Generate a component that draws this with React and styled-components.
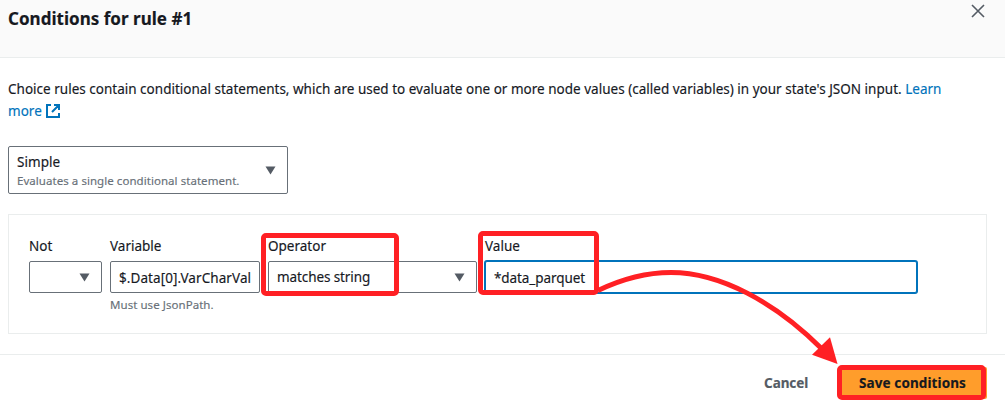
import React from "react";
import styled, { createGlobalStyle, css } from "styled-components";

const GlobalStyle = createGlobalStyle`
  * { box-sizing: border-box; }
  body {
    margin: 0;
    background: #fff;
    color: #16191f;
    font: 400 13.5px/22px "Noto Sans", "Open Sans", sans-serif;
    -webkit-text-stroke: 0.15px currentColor;
    overflow: hidden;
  }
`;

const Modal = styled.div`
  position: relative;
  width: 1005px;
  height: 406px;
  overflow: hidden;
`;

const Header = styled.header`
  display: flex;
  justify-content: space-between;
  align-items: flex-start;
  height: 58px;
  padding: 3px 19px 0 8px;
  background: #fafafa;
  border-bottom: 1px solid #eaeded;
`;

const Title = styled.h2`
  margin: 5px 0 0;
  font-size: 17px;
  line-height: 22px;
  font-weight: 700;
  letter-spacing: 0.02px;
  white-space: nowrap;
`;

const CloseButton = styled.button`
  display: flex;
  padding: 0;
  border: 0;
  background: none;
  color: #545b64;
`;

const Body = styled.main`
  padding: 20px 18px 20px 8px;
`;

const Description = styled.p`
  margin: 0 0 24px;
  white-space: nowrap;
  letter-spacing: 0.01px;
`;

const Link = styled.a`
  color: #0073bb;
`;

const ExternalIcon = styled.svg`
  margin-left: 4px;
  vertical-align: -2px;
`;

const control = css`
  display: flex;
  align-items: center;
  border: 1px solid #687078;
  border-radius: 2px;
  background: #fff;
  white-space: nowrap;
`;

const TypeSelect = styled.div`
  ${control}
  justify-content: space-between;
  width: 280px;
  height: 48px;
  padding: 0 11px 0 8px;
`;

const OptionText = styled.div`
  padding-top: 2px;
`;

const OptionLabel = styled.div`
  line-height: 20px;
  letter-spacing: 0.05px;
`;

const Hint = styled.div`
  color: #687078;
  font-size: 11.5px;
  line-height: 18px;
  letter-spacing: 0.05px;
  white-space: nowrap;
`;

const RuleCard = styled.section`
  display: flex;
  align-items: flex-start;
  gap: 8px;
  height: 120px;
  margin-top: 20px;
  padding: 20px;
  border: 1px solid #eaeded;
`;

const Field = styled.div`
  width: ${(p) => p.$width}px;
`;

const Label = styled.div`
  margin-bottom: 4px;
`;

const SelectBox = styled.div`
  ${control}
  justify-content: space-between;
  height: 32px;
  padding: 0 11px 0 8px;
  letter-spacing: -0.1px;
`;

const InputBox = styled.div`
  ${control}
  height: 32px;
  padding: 2px 0 0 8px;
  margin-bottom: 3px;
  letter-spacing: ${(p) => p.$spacing || "0"};
  ${(p) =>
    p.$focused &&
    css`
      border-color: #0073bb;
      box-shadow: 0 0 0 1px #0073bb;
    `}
`;

const Footer = styled.footer`
  display: flex;
  justify-content: flex-end;
  align-items: flex-start;
  gap: 10px;
  height: 52px;
  padding: 12px 18px 0 0;
  border-top: 1px solid #eaeded;
`;

const Button = styled.button`
  height: 32px;
  padding: 0 21px 0 20px;
  border: 0;
  border-radius: 2px;
  background: ${(p) => (p.$primary ? "#ff9d2b" : "transparent")};
  color: ${(p) => (p.$primary ? "#16191f" : "#545b64")};
  font: 700 13.5px/32px "Noto Sans", "Open Sans", sans-serif;
  letter-spacing: ${(p) => (p.$primary ? "0.1px" : "-0.1px")};
  white-space: nowrap;
`;

const Highlight = styled.div`
  position: absolute;
  left: ${(p) => p.$x}px;
  top: ${(p) => p.$y}px;
  width: ${(p) => p.$w}px;
  height: ${(p) => p.$h}px;
  border: 5px solid #ff2024;
  border-radius: 5px;
`;

const ArrowLayer = styled.svg`
  position: absolute;
  left: 0;
  top: 0;
  pointer-events: none;
`;

const Caret = () => (
  <svg width="11" height="9" viewBox="0 0 11 9">
    <path d="M0.5 0.5H10.5L5.5 8.5Z" fill="#545b64" />
  </svg>
);

export default function App() {
  return (
    <>
      <GlobalStyle />
      <Modal>
        <Header>
          <Title>Conditions for rule #1</Title>
          <CloseButton aria-label="Close">
            <svg width="16" height="16" viewBox="0 0 16 16" fill="none" stroke="currentColor" strokeWidth="1.6">
              <path d="M2 2L14 14M14 2L2 14" />
            </svg>
          </CloseButton>
        </Header>
        <Body>
          <Description>
            Choice rules contain conditional statements, which are used to evaluate one or more node values (called
            variables) in your state's JSON input. <Link>Learn</Link>
            <br />
            <Link>
              more
              <ExternalIcon width="14" height="14" viewBox="0 0 14 14" fill="none" stroke="#0073bb" strokeWidth="2">
                <path d="M5 1H1V13H13V9M8 1H13V6M13 1L6 8" />
              </ExternalIcon>
            </Link>
          </Description>
          <TypeSelect>
            <OptionText>
              <OptionLabel>Simple</OptionLabel>
              <Hint>Evaluates a single conditional statement.</Hint>
            </OptionText>
            <Caret />
          </TypeSelect>
          <RuleCard>
            <Field $width={73}>
              <Label>Not</Label>
              <SelectBox>
                <span />
                <Caret />
              </SelectBox>
            </Field>
            <Field $width={150}>
              <Label>Variable</Label>
              <InputBox $spacing="0.08px">$.Data[0].VarCharVal</InputBox>
              <Hint>Must use JsonPath.</Hint>
            </Field>
            <Field $width={209}>
              <Label>Operator</Label>
              <SelectBox>
                matches string
                <Caret />
              </SelectBox>
            </Field>
            <Field $width={432}>
              <Label>Value</Label>
              <InputBox $focused $spacing="-0.08px">*data_parquet</InputBox>
            </Field>
          </RuleCard>
        </Body>
        <Footer>
          <Button>Cancel</Button>
          <Button $primary>Save conditions</Button>
        </Footer>
        <Highlight $x={261} $y={233} $w={138} $h={63} />
        <Highlight $x={478} $y={231} $w={121} $h={64} />
        <Highlight $x={837} $y={365} $w={149} $h={35} />
        <ArrowLayer width="1005" height="406" viewBox="0 0 1005 406">
          <path
            d="M598 290.5C624 278 648 272.5 671 272.5C720 272.5 775 302 822 349"
            fill="none"
            stroke="#ff2024"
            strokeWidth="5"
          />
          <path d="M837.5 364L830 337.3L812 354.7Z" fill="#ff2024" />
        </ArrowLayer>
      </Modal>
    </>
  );
}
